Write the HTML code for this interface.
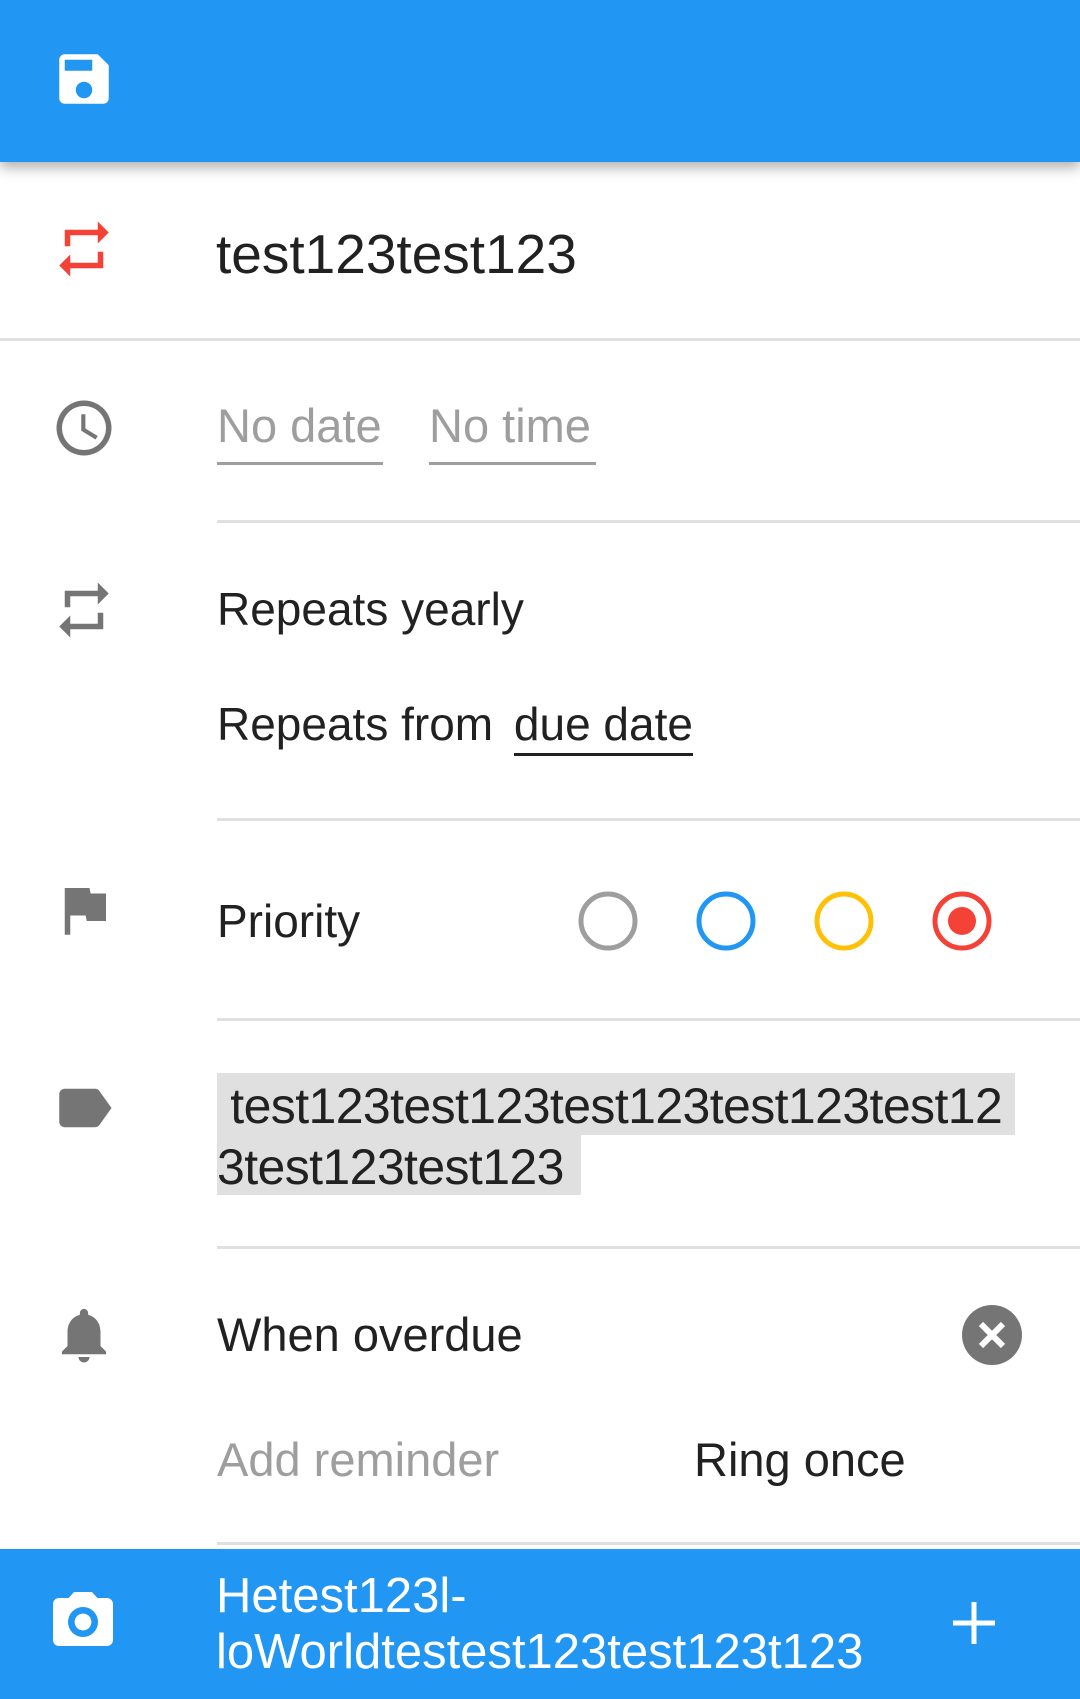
<!DOCTYPE html>
<html><head><meta charset="utf-8"><style>
*{margin:0;padding:0;box-sizing:border-box}
body{width:1080px;height:1699px;position:relative;background:#fff;font-family:"Liberation Sans",sans-serif;overflow:hidden;color:#212121}
.a{position:absolute;white-space:nowrap}
.t{font-size:46px;line-height:60px;height:60px}
.div{position:absolute;height:3px;background:#e0e0e0;right:0}
svg{position:absolute}
</style></head><body>
<div class="a" style="left:0;top:0;width:1080px;height:162px;background:#2196F3;box-shadow:0 6px 12px rgba(0,0,0,0.3)"></div>
<svg style="left:51px;top:46px" width="66" height="66" viewBox="0 0 24 24"><path fill="#fff" d="M17 3H5a2 2 0 0 0-2 2v14a2 2 0 0 0 2 2h14a2 2 0 0 0 2-2V7l-4-4zm-5 16a3 3 0 1 1 0-6 3 3 0 0 1 0 6zm3-10H5V5h10v4z"/></svg>

<svg style="left:51px;top:216px" width="66" height="66" viewBox="0 0 24 24"><path fill="#F44336" d="M7 7h10v3l4-4-4-4v3H5v6h2V7zm10 10H7v-3l-4 4 4 4v-3h12v-6h-2v4z"/></svg>
<div class="a" style="left:216px;top:222px;font-size:55px;line-height:64px">test123test123</div>
<div class="div" style="left:0;top:338px"></div>

<svg style="left:51px;top:395px" width="66" height="66" viewBox="0 0 24 24"><path fill="#757575" d="M12 2a10 10 0 1 0 0 20 10 10 0 0 0 0-20zm0 18a8 8 0 1 1 0-16 8 8 0 0 1 0 16zm.5-13H11v6l5.2 3.2.8-1.3-4.5-2.7V7z"/></svg>
<div class="a t" style="left:217px;top:396px;color:#9e9e9e;font-size:47px">No date</div>
<div class="a" style="left:217px;top:462px;width:166px;height:3px;background:#9e9e9e"></div>
<div class="a t" style="left:429px;top:396px;color:#9e9e9e;font-size:47px">No time</div>
<div class="a" style="left:429px;top:462px;width:167px;height:3px;background:#9e9e9e"></div>
<div class="div" style="left:217px;top:520px"></div>

<svg style="left:51px;top:577px" width="66" height="66" viewBox="0 0 24 24"><path fill="#757575" d="M7 7h10v3l4-4-4-4v3H5v6h2V7zm10 10H7v-3l-4 4 4 4v-3h12v-6h-2v4z"/></svg>
<div class="a t" style="left:217px;top:579px">Repeats yearly</div>
<div class="a t" style="left:217px;top:694px">Repeats from <span style="display:inline-block;border-bottom:3px solid #212121;line-height:58px;margin-left:8px">due date</span></div>
<div class="div" style="left:217px;top:818px"></div>

<svg style="left:51px;top:877px" width="66" height="66" viewBox="0 0 24 24"><path fill="#757575" d="M14.4 6L14 4H5v17h2v-7h5.6l.4 2h7V6z"/></svg>
<div class="a t" style="left:217px;top:891px">Priority</div>
<svg style="left:570px;top:883px" width="460" height="76">
<circle cx="38" cy="38" r="27" fill="none" stroke="#9e9e9e" stroke-width="5"/>
<circle cx="156" cy="38" r="27" fill="none" stroke="#2196F3" stroke-width="5"/>
<circle cx="274" cy="38" r="27" fill="none" stroke="#FFC107" stroke-width="5"/>
<circle cx="392" cy="38" r="27" fill="none" stroke="#F44336" stroke-width="5"/>
<circle cx="392" cy="38" r="14" fill="#F44336"/>
</svg>
<div class="div" style="left:217px;top:1018px"></div>

<svg style="left:51px;top:1075px" width="66" height="66" viewBox="0 0 24 24"><path fill="#757575" d="M17.6 5.8C17.3 5.3 16.7 5 16 5H5c-1.1 0-2 .9-2 2v10c0 1.1.9 2 2 2h11c.7 0 1.3-.3 1.6-.8L22 12l-4.4-6.2z"/></svg>
<div class="a" style="left:217px;top:1073px;width:798px;height:62px;background:#e0e0e0"></div>
<div class="a" style="left:217px;top:1135px;width:364px;height:60px;background:#e0e0e0"></div>
<div class="a" style="left:217px;top:1076px;font-size:50px;line-height:61px;letter-spacing:-0.6px">&nbsp;test123test123test123test123test12<br>3test123test123</div>
<div class="div" style="left:217px;top:1246px"></div>

<svg style="left:51px;top:1302px" width="66" height="66" viewBox="0 0 24 24"><path fill="#757575" d="M12 22c1.1 0 2-.9 2-2h-4c0 1.1.9 2 2 2zm6-6v-5c0-3.1-1.6-5.6-4.5-6.3V4c0-.8-.7-1.5-1.5-1.5s-1.5.7-1.5 1.5v.7C7.6 5.4 6 7.9 6 11v5l-2 2v1h16v-1l-2-2z"/></svg>
<div class="a t" style="left:217px;top:1305px;font-size:47px">When overdue</div>
<svg style="left:962px;top:1305px" width="60" height="60" viewBox="0 0 60 60"><circle cx="30" cy="30" r="30" fill="#757575"/><path d="M19 19L41 41M41 19L19 41" stroke="#fff" stroke-width="6"/></svg>
<div class="a t" style="left:217px;top:1430px;color:#9e9e9e;font-size:47px">Add reminder</div>
<div class="a t" style="left:694px;top:1430px;font-size:47px">Ring once</div>
<div class="div" style="left:217px;top:1542px"></div>

<div class="a" style="left:0;top:1549px;width:1080px;height:150px;background:#2196F3"></div>
<svg style="left:47px;top:1586px" width="72" height="72" viewBox="0 0 24 24"><path fill="#fff" d="M9 2L7.2 4H4c-1.1 0-2 .9-2 2v12c0 1.1.9 2 2 2h16c1.1 0 2-.9 2-2V6c0-1.1-.9-2-2-2h-3.2L15 2H9zm3 15a5 5 0 1 1 0-10 5 5 0 0 1 0 10zm0-2.2a2.8 2.8 0 1 0 0-5.6 2.8 2.8 0 0 0 0 5.6z"/></svg>
<div class="a" style="left:216px;top:1568px;color:#fff;font-size:49px;line-height:56px">Hetest123l-<br>loWorldtestest123test123t123</div>
<svg style="left:951px;top:1600px" width="46" height="46"><path d="M23 2V44M2 23H44" stroke="#fff" stroke-width="5"/></svg>
</body></html>
